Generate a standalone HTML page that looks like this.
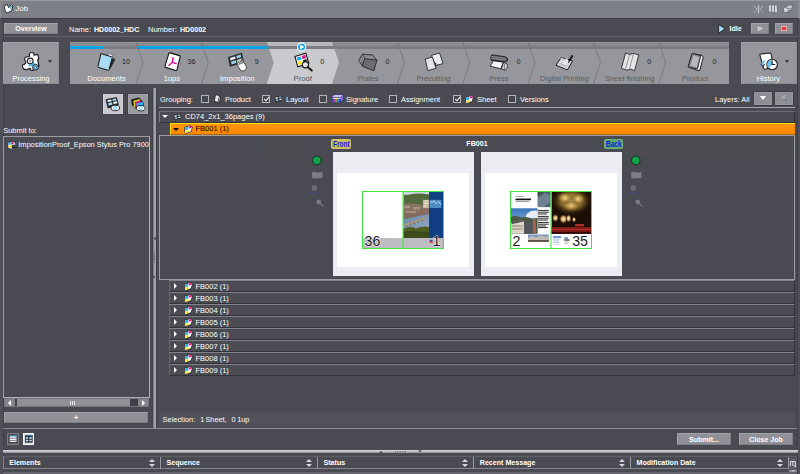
<!DOCTYPE html>
<html>
<head>
<meta charset="utf-8">
<title>Job</title>
<style>
*{box-sizing:border-box;margin:0;padding:0}
html,body{width:800px;height:474px;overflow:hidden}
body{background:#4f5058;font-family:"Liberation Sans",sans-serif;font-size:7.5px;color:#fff;position:relative;line-height:1}
.abs{position:absolute}
svg{position:absolute;overflow:visible}
svg text{font-family:"Liberation Sans",sans-serif}
#win{position:absolute;left:2.8px;top:0;width:794.8px;height:474px;background:#494a52;border-left:1px solid #3f4047;border-right:1px solid #3f4047}
#titlebar{position:absolute;left:0;top:0;width:800px;height:19.4px;background:#7e8088;border-top:1px solid #98999e;border-left:1px solid #8c8d93;border-right:2.5px solid #8e8f94;border-bottom:1px solid #3c3d44}
.t{position:absolute;white-space:nowrap;line-height:10px;height:10px}
.b{font-weight:bold;font-size:7.1px}
.btn{position:absolute;background:#909196;border:1px solid #a3a4a9;border-right-color:#7d7e84;border-bottom-color:#7d7e84;text-align:center;color:#fff}
.hl{position:absolute;height:1px;background:#8a8b91}
.vl{position:absolute;width:1px;background:#8a8b91}
.cb{position:absolute;top:95px;width:8px;height:8px;border:1px solid #b4b5b9;background:#45464d}
.cb.on:after{content:"";position:absolute;left:1.5px;top:-0.5px;width:2.2px;height:4.2px;border:solid #fff;border-width:0 1px 1px 0;transform:rotate(40deg)}
.row{position:absolute;left:169px;width:625.6px;height:12px;background:#4a4b53;border-top:1px solid #83848a;border-left:1px solid #6c6d74;border-bottom:1px solid #33343a;border-right:1px solid #2e2f36}
.row .t{top:0.5px}
.tri-r{position:absolute;width:0;height:0;border-left:3.7px solid #fff;border-top:3.3px solid transparent;border-bottom:3.3px solid transparent}
.tri-d{position:absolute;width:0;height:0;border-top:3.8px solid #fff;border-left:3.2px solid transparent;border-right:3.2px solid transparent}
.shicon{position:absolute;width:9px;height:9px}
</style>
</head>
<body>
<div id="win"></div>
<div id="titlebar"></div>
<div class="t" style="left:15.3px;top:4.2px;font-size:7.9px">Job</div>
<svg style="left:3px;top:3.4px" width="11" height="11" viewBox="0 0 11 11">
<path d="M1.2 3.2 L4.2 1.4 L5.6 4.6 L8.4 1.6 L9.8 2.6 L8.6 8 L4.2 9.8 L2.4 8.8 Z" fill="#fff" stroke="#1c1c20" stroke-width="0.9"/>
<path d="M6.4 4.6 L8.6 2.2 L9.2 2.8 L8 6.6 Z" fill="#38b8f0"/>
</svg>
<svg style="left:753px;top:4px" width="40" height="10" viewBox="753 4 40 10">
<path d="M754 6 L757 9.3 L754 12.6 M763 6 L760 9.3 L763 12.6" stroke="#b6b7bb" stroke-width="1" fill="none"/>
<path d="M758.5 5 V13.4" stroke="#c6c7cb" stroke-width="1.2"/>
<path d="M768.4 4.8 H777.2 L777.6 13 L768.4 12 Z" fill="#d6d7da" stroke="#5c5d64" stroke-width="0.7"/>
<path d="M771.4 5 V12.4 M774.4 5 V12.7" stroke="#5c5d64" stroke-width="0.8"/>
<path d="M783.4 8 L787 6.4 L787 5.2 L792.2 4.9 L792.2 9.8 L788.4 10.4 L788.4 12 L783.4 12.4 Z" fill="#d0d1d4" stroke="#5c5d64" stroke-width="0.7"/>
<path d="M787 6.4 V8.6 H792" stroke="#5c5d64" stroke-width="0.6" fill="none"/>
</svg>


<div class="btn" style="left:4px;top:23px;width:54px;height:11px"><span class="t b" style="left:0;top:0;width:52px">Overview</span></div>
<div class="t" style="left:69px;top:24.5px">Name:</div>
<div class="t b" style="left:94px;top:24.5px">HD0002_HDC</div>
<div class="t" style="left:148px;top:24.5px">Number:</div>
<div class="t b" style="left:180px;top:24.5px">HD0002</div>
<div class="t b" style="left:729.5px;top:24px">Idle</div>
<svg style="left:717px;top:23px" width="10" height="12" viewBox="717 23 10 12"><path d="M718.6 24.4 L725.2 28.8 L718.6 33.2 Z" fill="#a4dcf8" stroke="#1c1c20" stroke-width="0.9" stroke-linejoin="round"/></svg>
<div class="btn" style="left:751px;top:23px;width:18px;height:11px"><svg style="left:0;top:0" width="16" height="9" viewBox="752 24 16 9"><path d="M758 26.4 L762.8 28.6 L758 30.8 Z" fill="#c4c5c9" stroke="#dcdcdf" stroke-width="0.5"/></svg></div>
<div class="btn" style="left:775px;top:23px;width:18px;height:11px"><div class="abs" style="left:5.3px;top:2px;width:5.6px;height:5px;background:#e63c48;border:0.6px solid #e8a8ae"></div></div>
<div class="abs" style="left:3px;top:36px;width:794.5px;height:1.3px;background:#62636a"></div>


<div class="btn" style="left:3px;top:42.4px;width:56.3px;height:42px;background:#96979c;border-color:#a0a1a6 #8c8d92 #8c8d92 #a0a1a6"><span class="t" style="left:0;top:30.6px;width:54px">Processing</span><div class="tri-d" style="left:44.2px;top:16.6px;border-top:3px solid #34353c;border-left-width:2px;border-right-width:2px"></div>
<svg style="left:0;top:0" width="54" height="40" viewBox="4 43.4 54 40">
<path d="M25 60.6 Q23.6 58.4 25.8 57.6 L29.6 56.6 Q28.6 53.4 31.4 52.9 Q34.4 52.8 33.9 55.6 L37.8 54.8 L38.8 59.2 Q37 60.4 38.2 62.6 L39 66.8 L34.8 68 Q34.8 70.8 32.2 70.8 Q29.8 70.6 30.4 68.8 L26.4 70 Q23.4 70.4 22.6 67.6 Q21.8 65.2 24.2 64.8 Q26.8 63.4 25 60.6 Z" fill="#fff" stroke="#1c1c20" stroke-width="1.15" stroke-linejoin="round"/>
<circle cx="30.2" cy="61.4" r="2.9" fill="#fff" stroke="#1c1c20" stroke-width="1.1"/>
<circle cx="30.2" cy="61.4" r="0.9" fill="#dfe6ea" stroke="#1c1c20" stroke-width="0.4"/>
<path d="M28.6 65.9 Q32.6 66.6 34.4 62.6" stroke="#3cb0ec" stroke-width="1.5" fill="none"/>
<circle cx="35.5" cy="67.7" r="2.9" fill="#6cc0ec" stroke="#1c1c20" stroke-width="1"/>
<circle cx="35.5" cy="67.7" r="1" fill="#e8f4fa" stroke="#1c1c20" stroke-width="0.5"/>
</svg></div>
<div class="btn" style="left:740.5px;top:42.4px;width:56px;height:42px;background:#96979c;border-color:#a0a1a6 #8c8d92 #8c8d92 #a0a1a6"><span class="t" style="left:-0.2px;top:30.6px;width:54px">History</span><div class="tri-d" style="left:43.7px;top:16.6px;border-top:3px solid #34353c;border-left-width:2px;border-right-width:2px"></div>
<svg style="left:0;top:0" width="54" height="40" viewBox="741.5 43.4 54 40">
<path d="M759.4 55.6 Q759 54.6 760.2 54.4 L769.4 53.4 Q770.4 53.4 770.6 54.4 L772.6 66 Q772.8 67.2 771.6 67.4 L764.6 69.6 Q763.6 69.8 763.2 68.8 Z" fill="#fff" stroke="#1c1c20" stroke-width="1.1"/>
<path d="M762.4 66 Q761.4 62.4 764.6 61.2" stroke="#6cc4f0" stroke-width="1.6" fill="none"/>
<path d="M760.4 64.6 L762.4 67 L764.2 64.4" stroke="#1c1c20" stroke-width="0.9" fill="none"/>
<circle cx="771.6" cy="64.9" r="5.3" fill="#fff" stroke="#1c1c20" stroke-width="1.1"/>
<path d="M771.6 64.9 L771.6 60.2 A4.7 4.7 0 0 0 768.6 68.6 Z" fill="#6cc4f0"/>
<path d="M771.6 61 V64.9 H774.8" stroke="#1c1c20" stroke-width="1.1" fill="none"/>
</svg></div>

<svg style="left:0;top:42px" width="800" height="42" viewBox="0 42 800 42">
<rect x="70" y="42" width="659" height="42" fill="#96979c"/>
<polygon points="266.7,42 332.0,42 339.0,62.5 332.0,84 266.7,84 273.7,62.5" fill="#c9cace"/>
<rect x="70" y="42" width="659" height="4" fill="#3a3b46" fill-opacity="0.13"/>
<rect x="70" y="42" width="659" height="0.8" fill="#fff" fill-opacity="0.12"/>
<rect x="70" y="46" width="659" height="3" fill="#7c7d83"/>
<rect x="70" y="46" width="33" height="3" fill="#0aa4e4"/>
<rect x="137" y="46" width="131.2" height="3" fill="#0aa4e4"/>
<polyline points="136.0,42 143.0,62.5 136.0,84" fill="none" stroke="#6f7077" stroke-width="0.7"/>
<polyline points="201.3,42 208.3,62.5 201.3,84" fill="none" stroke="#6f7077" stroke-width="0.7"/>
<polyline points="397.4,42 404.4,62.5 397.4,84" fill="none" stroke="#6f7077" stroke-width="0.7"/>
<polyline points="462.7,42 469.7,62.5 462.7,84" fill="none" stroke="#6f7077" stroke-width="0.7"/>
<polyline points="528.0,42 535.0,62.5 528.0,84" fill="none" stroke="#6f7077" stroke-width="0.7"/>
<polyline points="593.4,42 600.4,62.5 593.4,84" fill="none" stroke="#6f7077" stroke-width="0.7"/>
<polyline points="658.7,42 665.7,62.5 658.7,84" fill="none" stroke="#6f7077" stroke-width="0.7"/>
<g transform="translate(107.0,62)"><path d="M0.5 -8.2 L5 -7.6 L6.2 -3.8 L8.4 -2.6 L3.6 6.4 L-1 5 Z" fill="#2a2a2e"/>
<path d="M0.8 -7.9 L4.8 -7.2 L5.8 -3.6 L3 -2 Z" fill="#fff"/>
<path d="M-6.2 -7.8 Q-6.6 -8.6 -5.6 -8.3 L4.6 -5.2 Q5.4 -4.9 5.2 -4.1 L2 7.8 Q1.8 8.6 1 8.3 L-8.6 5.4 Q-9.3 5.1 -9.1 4.4 Z" fill="#a8daf4" stroke="#111" stroke-width="1"/></g>
<text x="106.5" y="81.1" text-anchor="middle" font-size="7.6" fill="#fff">Documents</text>
<text x="126.0" y="63.5" text-anchor="middle" font-size="7.2" fill="#1c1c20">10</text>
<g transform="translate(172.4,62)"><path d="M-3.6 -8.6 Q-3.2 -9.4 -2.2 -9.1 L7 -6.4 Q7.9 -6.1 7.7 -5.2 L4.6 7.8 Q4.3 8.8 3.4 8.5 L-6.8 5.4 Q-7.6 5.1 -7.4 4.2 Z" fill="#fff" stroke="#111" stroke-width="1.1"/>
<path d="M0 0.3 L0.6 -4.2 M0 0.3 L3.8 1.6 M0 0.3 L-3.4 3.2" stroke="#d4148c" stroke-width="1.5" stroke-linecap="round" fill="none"/></g>
<text x="171.9" y="81.1" text-anchor="middle" font-size="7.6" fill="#fff">1ups</text>
<text x="191.4" y="63.5" text-anchor="middle" font-size="7.2" fill="#1c1c20">36</text>
<g transform="translate(237.8,62)"><path d="M-9.4 -4.6 L3.8 -8.8 L5.6 0.2 L-7.6 4.2 Z" fill="#2e3238" stroke="#1c1c20" stroke-width="0.8" stroke-linejoin="round"/>
<path d="M-7.8 -4 L-2.8 -5.6 L-2.2 -3.2 L-7.2 -1.6 Z" fill="#f0f6fa"/>
<path d="M-1.4 -6 L2.8 -7.4 L3.4 -5 L-0.8 -3.6 Z" fill="#9cd8f4"/>
<path d="M-6.8 -0.2 L-1.8 -1.8 L-1.2 0.8 L-6.2 2.4 Z" fill="#9cd8f4"/>
<path d="M-0.4 -2.4 L3.8 -3.8 L4.4 -1.2 L0.2 0.2 Z" fill="#dfeef6"/>
<path d="M-1 -1.6 L0.6 -2.8 L2.6 -3.2 L4.4 -2.4 L5.6 -0.6 L8.4 4 Q9.2 7.2 7 8.6 Q4.4 9.8 2.4 7.8 Q0.8 5.6 -0.6 2.2 Z" fill="#fff" stroke="#26262a" stroke-width="0.8" stroke-linejoin="round"/>
<path d="M0.2 -1.2 L2.2 2.6 M1.8 -2.2 L3.8 1.8 M3.4 -2.2 L5.2 1.4 M-0.6 1 L4.6 -1.2 M0.4 2.6 L5.4 0.4" stroke="#26262a" stroke-width="0.55"/></g>
<text x="237.3" y="81.1" text-anchor="middle" font-size="7.6" fill="#fff">Imposition</text>
<text x="256.8" y="63.5" text-anchor="middle" font-size="7.2" fill="#1c1c20">9</text>
<g transform="translate(303.2,62)"><path d="M-8.2 -5.4 L2.6 -8.8 L5.6 1.4 L-5.4 4.8 Z" fill="#fff" stroke="#111" stroke-width="1.1"/>
<path d="M-6.6 -4.4 L-2.6 -5.6 L-1.6 -2.4 L-5.6 -1.2 Z" fill="#18a8ec"/>
<path d="M-1.6 -6 L2 -7.2 L3 -4 L-0.6 -2.8 Z" fill="#e0148c"/>
<path d="M-5.4 -0.2 L-1.4 -1.4 L-0.4 1.8 L-4.4 3 Z" fill="#ffe414"/>
<path d="M-0.4 -1.8 L3.2 -3 L4.2 0.2 L0.6 1.4 Z" fill="#222"/>
<circle cx="2.2" cy="2.8" r="3.1" fill="#e6e6e8" stroke="#111" stroke-width="1.1"/>
<path d="M4.4 5 L8.6 8.6" stroke="#111" stroke-width="2" stroke-linecap="round"/></g>
<text x="302.7" y="81.1" text-anchor="middle" font-size="7.6" fill="#52535a">Proof</text>
<text x="322.2" y="63.5" text-anchor="middle" font-size="7.2" fill="#1c1c20">0</text>
<g transform="translate(368.6,62)"><path d="M-6 -7.8 L3.7 -7 L8.2 -1.8 L5.2 8.7 L-6 4.2 L-9.8 -1.8 Z" fill="#6a6b70" stroke="#2e2e32" stroke-width="1" stroke-linejoin="round"/>
<path d="M-6 -7.8 L3.7 -7 L8.2 -1.8 L-3.8 -3.3 Z" fill="#8e8f94" stroke="#2e2e32" stroke-width="0.7"/>
<path d="M-6 -7.8 L-3.8 -3.3 L-6 4.2 L-9.8 -1.8 Z" fill="#a0a1a5" stroke="#2e2e32" stroke-width="0.7"/>
<path d="M-7.2 -5.8 L-5 -1.6 L-7 3 M-8.4 -3.8 L-6.4 0 L-7.8 1.6" stroke="#2e2e32" stroke-width="0.5" fill="none"/>
<path d="M-3.8 -3.3 L8.2 -1.8 L5.2 8.7 L-6 4.2 Z" fill="#6c6d72" stroke="#2e2e32" stroke-width="0.8"/></g>
<text x="368.1" y="81.1" text-anchor="middle" font-size="7.6" fill="#5a5b62">Plates</text>
<text x="387.6" y="63.5" text-anchor="middle" font-size="7.2" fill="#1c1c20">0</text>
<g transform="translate(434.0,62)"><path d="M-2.6 -6.6 L5.6 -9 L9 1.6 L1.6 3.6 Z" fill="#ececee" stroke="#2a2a2e" stroke-width="0.9"/>
<path d="M-8.8 -3 L-1.6 -5 L2 6.4 L-6.2 8.6 Z" fill="#e4e4e6" stroke="#2a2a2e" stroke-width="0.9"/>
<path d="M0.6 0.6 L4 2.6 L2.2 2.2 L1.6 4 Z" fill="#2a2a2e"/></g>
<text x="433.5" y="81.1" text-anchor="middle" font-size="7.6" fill="#5a5b62">Precutting</text>
<g transform="translate(499.4,62)"><path d="M-7.6 -7.2 L6 -5.2 Q8.6 -4.2 8.2 -2 Q7.6 0 5.6 -0.2 L-8.4 -1.8 Q-9.4 -4.6 -7.6 -7.2 Z" fill="#4a4b50" stroke="#1e1e22" stroke-width="0.9"/>
<path d="M-8 -5.6 L6.6 -3.6 M-8.4 -3.8 L6.8 -1.8" stroke="#b8b9bd" stroke-width="0.7"/>
<path d="M-6 -1.2 L4 0.2 L1.4 6.8 L-9.2 4.2 Z" fill="#f4f4f6" stroke="#1e1e22" stroke-width="0.9"/>
<path d="M3.8 1 Q7.4 0 8 3.4 Q8.4 7 5.8 8.2 L2 7 Z" fill="#dcdcdf" stroke="#1e1e22" stroke-width="0.9"/>
<path d="M5.6 1.4 Q3.8 4.6 5.6 7.8" stroke="#1e1e22" stroke-width="0.6" fill="none"/></g>
<text x="498.9" y="81.1" text-anchor="middle" font-size="7.6" fill="#5a5b62">Press</text>
<text x="518.4" y="63.5" text-anchor="middle" font-size="7.2" fill="#1c1c20">0</text>
<g transform="translate(564.8,62)"><path d="M-3.6 -4.6 L7.8 -1.2 L2.6 8 L-8.8 3.2 Z" fill="#d4d5d8" stroke="#222" stroke-width="1"/>
<path d="M-4.4 1.8 L1.8 4.6" stroke="#8a8b90" stroke-width="0.7"/>
<path d="M-2.4 -1.4 L0.6 2.4 L2 -3.6 L3.6 1" stroke="#fff" stroke-width="0.8" fill="none"/>
<path d="M-6.4 -6.2 L-3 -1.6 M-0.2 -8.6 L0.8 -2.4 M-3.6 -7.4 L-1.2 -2.4" stroke="#b4b5ba" stroke-width="0.6"/>
<path d="M7.4 -6 L4.6 -1.4" stroke="#111" stroke-width="1.9" stroke-linecap="round"/>
<path d="M4.6 -1.4 L3.4 1" stroke="#111" stroke-width="0.8"/></g>
<text x="564.3" y="81.1" text-anchor="middle" font-size="7.6" fill="#5a5b62">Digital Printing</text>
<g transform="translate(630.2,62)"><path d="M-4.6 -9 L-0.6 -7.6 L3.4 -8.6 L8.6 -7 L4.4 8.6 L0.4 7.2 L-3.6 8.2 L-8.8 6.4 Z" fill="#e6e6e8" stroke="#2a2a2e" stroke-width="0.9"/>
<path d="M-0.6 -7.6 L-4.6 6.6 L-3.6 8.2 M3.4 -8.6 L-0.4 5.6 L0.4 7.2" stroke="#6c6d72" stroke-width="0.7" fill="none"/></g>
<text x="629.7" y="81.1" text-anchor="middle" font-size="7.6" fill="#5a5b62">Sheet finishing</text>
<text x="649.2" y="63.5" text-anchor="middle" font-size="7.2" fill="#1c1c20">0</text>
<g transform="translate(695.6,62)"><path d="M-3.4 -8.6 L6.4 -6.6 L7.6 -4.8 L4.4 8 L2.4 8.6 L-7.4 4.8 Z" fill="#f4f4f6" stroke="#222" stroke-width="1"/>
<path d="M-3.4 -8.6 L5.2 -6.4 L1.8 7.2 L-7.4 4.8 Z" fill="#8e8f94" stroke="#222" stroke-width="0.9"/>
<path d="M-2.2 -6.2 L3.6 -4.8 L1 5.2 L-5 3.6 Z" fill="#b8b9bd"/></g>
<text x="695.1" y="81.1" text-anchor="middle" font-size="7.6" fill="#5a5b62">Product</text>
<text x="714.6" y="63.5" text-anchor="middle" font-size="7.2" fill="#1c1c20">0</text>
<circle cx="301.6" cy="47" r="4.1" fill="#1ca6e8" stroke="#fff" stroke-width="1.1"/><path d="M300.2 44.6 L304.3 47 L300.2 49.4 Z" fill="#fff"/>
</svg>

<div class="btn" style="left:103px;top:94px;width:20px;height:20px;background:#c8c9cd;border-color:#d4d5d8;box-shadow:0 0 0 1px #3e3f46"><svg style="left:0;top:0" width="18" height="18" viewBox="104 95 18 18">
<path d="M106 99.6 L116.6 97.6 L118.4 105 L108 108 Z" fill="#2c3036" stroke="#1c1c20" stroke-width="0.8"/>
<path d="M107.4 100.2 L111.2 99.5 L111.6 101.2 L107.8 102 Z" fill="#eef6fa"/>
<path d="M112.4 99.2 L116 98.5 L116.5 100.3 L112.8 101 Z" fill="#a6dcf4"/>
<path d="M108.2 103.2 L112 102.3 L112.5 104.4 L108.7 105.4 Z" fill="#a6dcf4"/>
<path d="M113.2 102 L116.8 101.2 L117.3 103.2 L113.7 104 Z" fill="#eef6fa"/>
<ellipse cx="115.3" cy="108" rx="4.3" ry="2.7" fill="#fff" stroke="#1c1c20" stroke-width="0.9"/>
<circle cx="115.1" cy="107.9" r="2.1" fill="#7fd0f6"/><circle cx="115.1" cy="107.7" r="1" fill="#e8f8ff"/>
</svg></div>
<div class="btn" style="left:128px;top:94px;width:20px;height:20px;background:#9a9b9f;border-color:#a4a5a9;box-shadow:0 0 0 1px #3e3f46"><svg style="left:0;top:0" width="18" height="18" viewBox="129 95 18 18">
<path d="M131.2 99.6 L139 97.4 L143.8 103 L143.6 108 L137 109.6 L131.8 105 Z" fill="#141418"/>
<path d="M133.2 100.8 L139.6 99 L140.4 105.4 L134 107.2 Z" fill="#e6d018"/>
<path d="M134.8 102 L141 100.4 L141.8 106.4 L135.6 108 Z" fill="#c8147c"/>
<path d="M136.4 103.4 L143 101.8 L143.4 107.6 L137.2 109 Z" fill="#20b4f4"/>
<ellipse cx="140.8" cy="108.2" rx="4.3" ry="2.7" fill="#fff" stroke="#1c1c20" stroke-width="0.9"/>
<circle cx="140.6" cy="108.1" r="2.1" fill="#7fd0f6"/><circle cx="140.6" cy="107.9" r="1" fill="#e8f8ff"/>
</svg></div>
<div class="t" style="left:3.2px;top:125.6px">Submit to:</div>
<div class="abs" style="left:3px;top:136px;width:147.3px;height:261.6px;border:1px solid #9c9da2;border-right:1.3px solid #b0b1b5;border-bottom-color:#b0b1b5"></div>
<div class="t" style="left:18.3px;top:140px;width:131px;overflow:hidden;font-size:7.4px">ImpositionProof_Epson Stylus Pro 7900</div>
<svg style="left:7px;top:140.5px" width="10" height="9" viewBox="0 0 10 9">
<path d="M0.5 1.6 L6 0.5 L8.6 2.4 L9.2 7.4 L7 8.4 L1.2 7.4 Z" fill="#fff" stroke="#26262a" stroke-width="0.7"/>
<path d="M1.2 2 L3.6 1.5 L3.8 3.6 L1.4 4 Z" fill="#18b0f0"/>
<path d="M4 1.4 L6.2 1 L6.6 3 L4.2 3.5 Z" fill="#e0148c"/>
<path d="M1.5 4.4 L3.9 4 L4.1 6.4 L1.8 6.8 Z" fill="#ffe414"/>
<path d="M4.6 4 L8.4 3.4 L8.8 7.2 L7 8 L4.8 7.2 Z" fill="#1c1c20"/>
<path d="M5.4 5.2 L7.6 4.8" stroke="#d8d8dc" stroke-width="0.6"/>
</svg>
<!-- scrollbar -->
<div class="abs" style="left:4px;top:398px;width:145px;height:9px;background:#3f4047;border:1px solid #74757b"></div>
<div class="abs" style="left:5px;top:399px;width:10px;height:7px;background:#85868c"><div class="tri-r" style="left:2.5px;top:0.5px;transform:scaleX(-1);border-top-width:3px;border-bottom-width:3px"></div></div>
<div class="abs" style="left:17px;top:399px;width:113px;height:7px;background:#909196"><div class="abs" style="left:53px;top:1.5px;width:1px;height:4px;background:#e6e6e8;box-shadow:2px 0 #e6e6e8,4px 0 #e6e6e8"></div></div>
<div class="abs" style="left:138px;top:399px;width:10px;height:7px;background:#85868c"><div class="tri-r" style="left:3.5px;top:0.5px;border-top-width:3px;border-bottom-width:3px"></div></div>
<div class="btn" style="left:4px;top:412px;width:144px;height:11px"><span class="t b" style="left:0;top:0;width:142px">+</span></div>
<!-- splitter -->
<div class="abs" style="left:152.2px;top:88px;width:4.5px;height:340px;background:#404148"></div>
<div class="abs" style="left:152.7px;top:88px;width:3.5px;height:340px;background:linear-gradient(90deg,#7e7f85,#8c8d92 35%,#a6a7ab 60%,#a0a1a6)"></div>
<svg style="left:152px;top:234px" width="5" height="48" viewBox="152 234 5 48">
<path d="M155.6 236.6 L153.4 238.4 L155.6 240.2 Z" fill="#44454c"/>
<path d="M153.4 275.2 L155.6 277 L153.4 278.8 Z" fill="#44454c"/>
<path d="M154.4 252 V263.4" stroke="#44454c" stroke-width="1.2" stroke-dasharray="1 1.3"/>
</svg>

<div class="t" style="left:160px;top:94.6px">Grouping:</div>
<div class="cb" style="left:201px"></div>
<svg style="left:213px;top:93.5px" width="9" height="10" viewBox="0 0 9 10"><path d="M2.6 0.6 L6.4 1.4 L8 3 L6.6 9 L5 9.4 L0.8 7.4 Z" fill="#2a2a2e"/><path d="M3 1.2 L6 1.9 L4.6 8 L1.6 6.8 Z" fill="#e8e8ea"/><path d="M6.4 2.4 L7.2 3.2 L5.9 8.4 L5.2 8.4 Z" fill="#b8b9bd"/></svg>
<div class="t" style="left:225px;top:94.6px">Product</div>
<div class="cb on" style="left:262px"></div>
<svg style="left:274px;top:95px" width="9" height="8" viewBox="0 0 9 8"><path d="M0.4 2.2 L7.4 0.6 L8.6 5.4 L1.6 7.4 Z" fill="#2c3036"/><path d="M1.3 2.7 L3.7 2.1 L4 3.3 L1.6 3.9 Z" fill="#f2f8fc"/><path d="M4.8 1.9 L7 1.4 L7.3 2.5 L5.1 3.1 Z" fill="#a6dcf4"/><path d="M1.9 4.8 L4.2 4.2 L4.5 5.5 L2.2 6.1 Z" fill="#a6dcf4"/><path d="M5.3 3.9 L7.5 3.4 L7.8 4.6 L5.6 5.2 Z" fill="#f2f8fc"/></svg>
<div class="t" style="left:286px;top:94.6px">Layout</div>
<div class="cb" style="left:319px"></div>
<svg style="left:331px;top:94.3px" width="13" height="9" viewBox="0 0 13 9"><path d="M0.4 3 L3 0.6 L12.4 0.6 L12.4 5.6 L9.8 8.4 L1.6 8.4 L0.4 6 Z" fill="#4838a8"/><path d="M1.2 2.8 L3.2 1.2 L11.6 1.2 L9.8 2.8 Z" fill="#f0f0f8"/><path d="M1.6 3.8 H9.6 V5 H1.6 Z" fill="#dcdcf4"/><path d="M10 3.2 L12 1.4 V5.2 L10 7.4 Z" fill="#8474d8"/><rect x="2.4" y="5.6" width="1.4" height="2.2" fill="#f03c9c"/><rect x="4.6" y="3.6" width="1.2" height="4.2" fill="#ffe414"/><rect x="6.6" y="5.6" width="1.4" height="2.2" fill="#28b8f4"/><rect x="4.6" y="5.6" width="1.2" height="1" fill="#1c8c3c"/></svg>
<div class="t" style="left:346px;top:94.6px">Signature</div>
<div class="cb" style="left:389px"></div>
<div class="t" style="left:401px;top:94.6px">Assignment</div>
<div class="cb on" style="left:453px"></div>
<svg style="left:465px;top:94.5px" width="9" height="9" viewBox="0 0 9 9"><path d="M0.6 2.2 L6.4 0.6 L8.4 2 L7.2 6.6 L1.8 8.4 L0.6 7.4 Z" fill="#fff" stroke="#26262a" stroke-width="0.8"/><path d="M1.2 2.6 L4 1.9 L4.3 4.4 L1.4 5.2 Z" fill="#18b0f0"/><path d="M4.6 1.7 L7.2 1.1 L7.8 2.6 L5 3.8 Z" fill="#e0148c"/><path d="M1.5 5.5 L4.3 4.8 L4.5 7 L1.9 7.8 Z" fill="#ffe414"/></svg>
<div class="t" style="left:477px;top:94.6px">Sheet</div>
<div class="cb" style="left:508px"></div>
<div class="t" style="left:520px;top:94.6px">Versions</div>
<div class="t" style="left:715px;top:94.6px">Layers: All</div>
<div class="btn" style="left:754.3px;top:92px;width:17.8px;height:12.8px;background:#8e8f94;border-color:#96979c;box-shadow:0 0 0 0.8px #3a3b42"><div class="tri-d" style="left:4.6px;top:3.2px;border-top-width:4px;border-left-width:3.7px;border-right-width:3.7px"></div></div>
<div class="btn" style="left:775.3px;top:92px;width:17.8px;height:12.8px;background:#8e8f94;border-color:#96979c;box-shadow:0 0 0 0.8px #3a3b42"><svg style="left:0;top:0" width="16" height="11" viewBox="776.3 93 16 11"><ellipse cx="783.6" cy="96.8" rx="4.4" ry="1.7" transform="rotate(-32 783.6 96.8)" fill="#a6a7ab" stroke="#74757b" stroke-width="0.6"/><path d="M785 98.4 L787.4 101.6" stroke="#74757b" stroke-width="1.1"/><path d="M784 98 L785.6 97.2 L785.8 99 Z" fill="#9ccbe6"/></svg></div>
<div class="abs" style="left:159px;top:107.1px;width:636px;height:1.3px;background:#a4a5aa"></div>
<div class="abs" style="left:159px;top:111px;width:635.6px;height:12px;border-right:1px solid #2e2f36;border-bottom:1px solid #34353b;border-top:1px solid #6c6d74;border-left:1px solid #7b7c83"></div>
<div class="tri-d" style="left:162.4px;top:115.4px"></div>
<svg style="left:173px;top:113px" width="9" height="8" viewBox="0 0 9 8"><path d="M0.4 2.2 L7.4 0.6 L8.6 5.4 L1.6 7.4 Z" fill="#2c3036"/><path d="M1.3 2.7 L3.7 2.1 L4 3.3 L1.6 3.9 Z" fill="#f2f8fc"/><path d="M4.8 1.9 L7 1.4 L7.3 2.5 L5.1 3.1 Z" fill="#a6dcf4"/><path d="M1.9 4.8 L4.2 4.2 L4.5 5.5 L2.2 6.1 Z" fill="#a6dcf4"/><path d="M5.3 3.9 L7.5 3.4 L7.8 4.6 L5.6 5.2 Z" fill="#f2f8fc"/></svg>
<div class="t" style="left:185px;top:112px">CD74_2x1_36pages (9)</div>
<div class="abs" style="left:170px;top:123px;width:625px;height:12px;background:linear-gradient(#ff9410,#ff8c00 70%,#fa8800);border-bottom:1px solid #a86a14;border-top:1px solid #f2dc14;border-left:1px solid #f2dc14"></div>
<div class="tri-d" style="left:172.7px;top:127.6px;border-top-color:#000;border-top-width:3.3px;border-left-width:3px;border-right-width:3px"></div>
<svg style="left:183.5px;top:124.5px" width="9" height="9" viewBox="0 0 9 9"><path d="M0.6 2.2 L6.4 0.6 L8.4 2 L7.2 6.6 L1.8 8.4 L0.6 7.4 Z" fill="#fff" stroke="#26262a" stroke-width="0.8"/><path d="M1.2 2.6 L4 1.9 L4.3 4.4 L1.4 5.2 Z" fill="#18b0f0"/><path d="M4.6 1.7 L7.2 1.1 L7.8 2.6 L5 3.8 Z" fill="#e0148c"/><path d="M1.5 5.5 L4.3 4.8 L4.5 7 L1.9 7.8 Z" fill="#ffe414"/></svg>
<div class="t" style="left:195.5px;top:124px;color:#000">FB001 (1)</div>
<div class="abs" style="left:159px;top:135px;width:636.2px;height:145px;border:1px solid #9d9ea3;background:#494a52"></div>
<div class="abs" style="left:264.6px;top:136.2px;width:38.2px;height:20.2px;background:#4c4c50"></div>
<div class="abs" style="left:622px;top:137px;width:172px;height:19.4px;background:#4c4c50"></div>
<div class="abs" style="left:330.5px;top:138.6px;width:20.5px;height:10.2px;background:#cbbd5a;border:1px solid #d2c666;border-radius:1.5px"><span class="t b" style="left:1.2px;top:0.3px;color:#1414ee;font-size:8.2px;transform:scaleX(0.8);transform-origin:0 0">Front</span></div>
<div class="abs" style="left:603.5px;top:138.6px;width:19.5px;height:10.2px;background:#5aaa62;border:1px solid #6cb674;border-radius:1.5px"><span class="t b" style="left:1.2px;top:0.3px;color:#1414ee;font-size:8.2px;transform:scaleX(0.8);transform-origin:0 0">Back</span></div>
<div class="t b" style="left:427px;top:139px;width:100px;text-align:center">FB001</div>
<div class="abs" style="left:332.5px;top:151.5px;width:141px;height:124.5px;background:#ebedf3"></div>
<div class="abs" style="left:337.0px;top:173px;width:131.5px;height:94px;background:#fff"></div>
<div class="abs" style="left:480.5px;top:151.5px;width:141px;height:124.5px;background:#ebedf3"></div>
<div class="abs" style="left:485.0px;top:173px;width:131.5px;height:94px;background:#fff"></div>

<svg style="left:362px;top:191px" width="82" height="58" viewBox="362 191 82 58">
<defs>
<linearGradient id="gHill" x1="0" y1="0" x2="0" y2="1"><stop offset="0" stop-color="#4e6a3a"/><stop offset="1" stop-color="#5f6e4c"/></linearGradient>
<linearGradient id="gTown" x1="0" y1="0" x2="0" y2="1"><stop offset="0" stop-color="#8a7664"/><stop offset="1" stop-color="#80685c"/></linearGradient>
<linearGradient id="gRiver" x1="0" y1="0" x2="1" y2="1"><stop offset="0" stop-color="#6c86a6"/><stop offset="1" stop-color="#90a8c4"/></linearGradient>
<radialGradient id="gFw1" cx="0.5" cy="0.5" r="0.5"><stop offset="0" stop-color="#f0d890"/><stop offset="0.45" stop-color="#b08c3c"/><stop offset="1" stop-color="#3a280c" stop-opacity="0"/></radialGradient>
<radialGradient id="gFw2" cx="0.5" cy="0.5" r="0.5"><stop offset="0" stop-color="#fff4d0"/><stop offset="0.5" stop-color="#c8a060"/><stop offset="1" stop-color="#402008" stop-opacity="0"/></radialGradient>
<linearGradient id="gSky" x1="0" y1="0" x2="0" y2="1"><stop offset="0" stop-color="#3c74bc"/><stop offset="1" stop-color="#a4c4e4"/></linearGradient>
</defs>
<rect x="362" y="191" width="82" height="58" fill="#fff"/>
<rect x="362.5" y="238" width="81" height="10.5" fill="#bdbdc1"/>
<rect x="403.5" y="191.5" width="25.5" height="46.5" fill="url(#gHill)"/>
<path d="M403.5 191.5 H429 V194.5 Q418 192.4 410 194.6 Q406 195.4 403.5 194.6 Z" fill="#ccd6de"/>
<path d="M403.5 204.5 Q412 202.5 421 205 L429 203.5 V218 H403.5 Z" fill="url(#gTown)"/>
<path d="M403.5 206 H410 V208 H403.5 Z M413 207 H420 V209.4 H413 Z M406 211 H416 V213 H406 Z" fill="#b4a090" fill-opacity="0.7"/>
<path d="M403.5 219 L429 214 V228 L403.5 230 Z" fill="url(#gRiver)"/>
<path d="M404 224.4 L425 217.4 L425.6 219 L404.6 226.2 Z" fill="#b49a74"/>
<path d="M406 225 L406.6 227 M410 223.6 L410.6 225.6 M414 222.2 L414.6 224.2 M418 220.8 L418.6 222.8 M422 219.4 L422.6 221.4" stroke="#6c5c44" stroke-width="0.8"/>
<path d="M403.5 229 Q410 225.4 416 228.4 Q422 225.8 429 227 V238 H403.5 Z" fill="#515c22"/>
<path d="M403.5 232 Q412 229.4 420 232 Q425 231 429 232 V238 H403.5 Z" fill="#3c4a1c"/>
<rect x="429" y="191.5" width="14.5" height="46.5" fill="#0f3f80"/>
<rect x="429.6" y="199.8" width="11.8" height="8.2" fill="#4e8cc4"/>
<path d="M430 201 L432 203 L434 200.6 L436 204 L438.4 201.4 L441 205" stroke="#a8d0ec" stroke-width="1" fill="none"/>
<rect x="423" y="199.8" width="6" height="8.2" fill="#c4b49c"/>
<path d="M423.6 201 H428 M424 203.4 H428.4 M423.6 206 H427" stroke="#f0ece4" stroke-width="0.9"/>
<rect x="429.6" y="239.8" width="3" height="1.6" fill="#2c4ca8"/><rect x="429.6" y="241.4" width="3" height="1.6" fill="#e03838"/>
<rect x="362.5" y="191.5" width="81" height="57" fill="none" stroke="#3fe43f" stroke-width="1"/>
<path d="M403 191 V249" stroke="#3fe43f" stroke-width="1"/>
<text x="364.6" y="246.2" font-size="14.2" fill="#18181a" stroke="#fff" stroke-width="1.2" stroke-opacity="0.8" paint-order="stroke">36</text>
<text x="432.4" y="246.2" font-size="14.2" fill="#18181a" stroke="#fff" stroke-width="1.2" stroke-opacity="0.8" paint-order="stroke">1</text>
</svg>


<svg style="left:510px;top:191px" width="82" height="58" viewBox="510 191 82 58">
<rect x="510" y="191" width="82" height="58" fill="#fff"/>
<path d="M515.5 196.4 H524" stroke="#666" stroke-width="0.6"/>
<path d="M515.5 199.4 H531" stroke="#111" stroke-width="1.7"/>
<path d="M515.5 201.6 H529" stroke="#555" stroke-width="0.6"/>
<rect x="537.7" y="191.5" width="13" height="15.6" fill="#4a6270"/>
<path d="M537.7 198 L545 193 L550.7 196 V202 L543 207 H537.7 Z" fill="#8090a0" fill-opacity="0.7"/>
<path d="M537.7 191.5 H544 L537.7 196 Z" fill="#3c5440"/>
<rect x="510.5" y="208.3" width="27" height="25.4" fill="url(#gSky)"/>
<path d="M528 213 Q532 209.6 537.5 211 V218 H526 Q525 215 528 213 Z" fill="#e4ecf4"/>
<path d="M510.5 217 Q516 214.6 521 217.6 Q527 216 532 219 L537.5 218 V233.7 H510.5 Z" fill="#4c5a44"/>
<path d="M511 222 L524 220 V233.7 H511 Z" fill="#dcd4c4"/>
<path d="M511 222 L524 220 L526 221 L512 224 Z" fill="#4a4a50"/>
<path d="M512 226 H523 M512 229 H523" stroke="#847868" stroke-width="0.9"/>
<path d="M524 221 L534 222 V233.7 H524 Z" fill="#54545c"/>
<path d="M533 219 L535.6 219 L536 233.7 H533 Z" fill="#a8644c"/>
<rect x="538" y="209.4" width="10.8" height="18.4" fill="#fff"/>
<path d="M538 210.4 H548.8 M538 212.2 H548.8 M538 214 H547 M538 216.4 H548.8 M538 218.2 H548.8 M538 220 H548 M538 222.4 H548.8 M538 224.2 H548.8 M538 226 H546 M538 227.6 H548" stroke="#2a2a2a" stroke-width="1"/>
<rect x="528" y="234.5" width="20.8" height="7.4" fill="#7c98c0"/>
<path d="M528 238 L532 236 L536 237.4 L541 235.6 L545 237 L548.8 236 V241.9 H528 Z" fill="#c4bcb0"/>
<path d="M528 240 H548.8 V241.9 H528 Z" fill="#5c5448"/>
<rect x="551.5" y="191.5" width="39.5" height="42.2" fill="#1c0e06"/>
<clipPath id="cFw"><rect x="551.5" y="191.5" width="39.5" height="42.2"/></clipPath>
<g clip-path="url(#cFw)">
<ellipse cx="571.5" cy="201" rx="20" ry="14" fill="url(#gFw1)"/>
<ellipse cx="565" cy="198" rx="9" ry="7" fill="url(#gFw1)"/>
<ellipse cx="578" cy="199" rx="8" ry="7" fill="url(#gFw1)"/>
<ellipse cx="571" cy="206" rx="10" ry="6" fill="url(#gFw1)" fill-opacity="0.7"/>
</g>
<ellipse cx="555.4" cy="218" rx="3.4" ry="4.2" fill="url(#gFw2)"/>
<ellipse cx="563.4" cy="219" rx="4.4" ry="5" fill="url(#gFw2)"/>
<ellipse cx="568.6" cy="218.4" rx="3" ry="4.4" fill="url(#gFw2)"/>
<ellipse cx="574" cy="219.6" rx="2.2" ry="3" fill="url(#gFw2)"/>
<rect x="551.5" y="227" width="39.5" height="6.7" fill="#7c1814"/>
<path d="M551.5 229.4 H591" stroke="#c83c34" stroke-width="1.3" stroke-dasharray="2 1"/>
<path d="M575 224 H584 V226.4 H575 Z" fill="#b02c28"/>
<path d="M551.5 232 H591 V233.7 H551.5 Z" fill="#2c0c08"/>
<path d="M553 237 H561" stroke="#2c6cc8" stroke-width="1.4"/>
<path d="M553 239.2 H560 M553 240.8 H559 M553 242.4 H560" stroke="#9cc0e0" stroke-width="0.8"/>
<path d="M554 244.4 H559" stroke="#bbb" stroke-width="0.6"/>
<path d="M564.3 238 H568" stroke="#2c6cc8" stroke-width="1.2"/>
<path d="M564.3 240 H569.5" stroke="#222" stroke-width="1.2"/>
<path d="M564.3 242 H569 M564.3 243.4 H568" stroke="#999" stroke-width="0.6"/>
<rect x="510.5" y="191.5" width="81" height="57" fill="none" stroke="#3fe43f" stroke-width="1"/>
<path d="M551 191 V249" stroke="#3fe43f" stroke-width="1"/>
<text x="512.6" y="246.2" font-size="14.2" fill="#18181a" stroke="#fff" stroke-width="1.2" stroke-opacity="0.8" paint-order="stroke">2</text>
<text x="572.2" y="246.2" font-size="14.2" fill="#18181a" stroke="#fff" stroke-width="1.2" stroke-opacity="0.8" paint-order="stroke">35</text>
</svg>

<svg style="left:309px;top:154px" width="18" height="56" viewBox="-8 154 18 56"><circle cx="-0.2" cy="160.4" r="4.3" fill="#12a048" stroke="#0a2c16" stroke-width="0.9"/><path d="M-5.2 172.4 L-2 171.6 L-0.8 172.6 L3.4 172.4 L5.4 171.6 L5.5 178 L-4.6 178.6 Z" fill="#7c7d83"/><rect x="-5.2" y="185.6" width="5" height="4.8" rx="1" fill="#6c6d75"/><path d="M-7 192.4 H1" stroke="#3c4c9c" stroke-width="0.8"/><circle cx="1.7" cy="201.9" r="2.3" fill="#7c7d83"/><path d="M3 203.4 L6.4 206.6" stroke="#7c7d83" stroke-width="1.3"/></svg>
<svg style="left:628px;top:154px" width="18" height="56" viewBox="-8 154 18 56"><circle cx="-0.2" cy="160.4" r="4.3" fill="#12a048" stroke="#0a2c16" stroke-width="0.9"/><path d="M-5.2 172.4 L-2 171.6 L-0.8 172.6 L3.4 172.4 L5.4 171.6 L5.5 178 L-4.6 178.6 Z" fill="#7c7d83"/><rect x="-5.2" y="185.6" width="5" height="4.8" rx="1" fill="#6c6d75"/><path d="M-7 192.4 H1" stroke="#3c4c9c" stroke-width="0.8"/><circle cx="1.7" cy="201.9" r="2.3" fill="#7c7d83"/><path d="M3 203.4 L6.4 206.6" stroke="#7c7d83" stroke-width="1.3"/></svg>
<div class="row" style="top:280px"><div class="tri-r" style="left:4px;top:2.2px"></div><svg style="left:14.2px;top:0.5px" width="9" height="9" viewBox="0 0 9 9"><path d="M0.6 2.2 L6.4 0.6 L8.4 2 L7.2 6.6 L1.8 8.4 L0.6 7.4 Z" fill="#fff" stroke="#26262a" stroke-width="0.8"/><path d="M1.2 2.6 L4 1.9 L4.3 4.4 L1.4 5.2 Z" fill="#18b0f0"/><path d="M4.6 1.7 L7.2 1.1 L7.8 2.6 L5 3.8 Z" fill="#e0148c"/><path d="M1.5 5.5 L4.3 4.8 L4.5 7 L1.9 7.8 Z" fill="#ffe414"/></svg><span class="t" style="left:25.5px">FB002 (1)</span></div>
<div class="row" style="top:292px"><div class="tri-r" style="left:4px;top:2.2px"></div><svg style="left:14.2px;top:0.5px" width="9" height="9" viewBox="0 0 9 9"><path d="M0.6 2.2 L6.4 0.6 L8.4 2 L7.2 6.6 L1.8 8.4 L0.6 7.4 Z" fill="#fff" stroke="#26262a" stroke-width="0.8"/><path d="M1.2 2.6 L4 1.9 L4.3 4.4 L1.4 5.2 Z" fill="#18b0f0"/><path d="M4.6 1.7 L7.2 1.1 L7.8 2.6 L5 3.8 Z" fill="#e0148c"/><path d="M1.5 5.5 L4.3 4.8 L4.5 7 L1.9 7.8 Z" fill="#ffe414"/></svg><span class="t" style="left:25.5px">FB003 (1)</span></div>
<div class="row" style="top:304px"><div class="tri-r" style="left:4px;top:2.2px"></div><svg style="left:14.2px;top:0.5px" width="9" height="9" viewBox="0 0 9 9"><path d="M0.6 2.2 L6.4 0.6 L8.4 2 L7.2 6.6 L1.8 8.4 L0.6 7.4 Z" fill="#fff" stroke="#26262a" stroke-width="0.8"/><path d="M1.2 2.6 L4 1.9 L4.3 4.4 L1.4 5.2 Z" fill="#18b0f0"/><path d="M4.6 1.7 L7.2 1.1 L7.8 2.6 L5 3.8 Z" fill="#e0148c"/><path d="M1.5 5.5 L4.3 4.8 L4.5 7 L1.9 7.8 Z" fill="#ffe414"/></svg><span class="t" style="left:25.5px">FB004 (1)</span></div>
<div class="row" style="top:316px"><div class="tri-r" style="left:4px;top:2.2px"></div><svg style="left:14.2px;top:0.5px" width="9" height="9" viewBox="0 0 9 9"><path d="M0.6 2.2 L6.4 0.6 L8.4 2 L7.2 6.6 L1.8 8.4 L0.6 7.4 Z" fill="#fff" stroke="#26262a" stroke-width="0.8"/><path d="M1.2 2.6 L4 1.9 L4.3 4.4 L1.4 5.2 Z" fill="#18b0f0"/><path d="M4.6 1.7 L7.2 1.1 L7.8 2.6 L5 3.8 Z" fill="#e0148c"/><path d="M1.5 5.5 L4.3 4.8 L4.5 7 L1.9 7.8 Z" fill="#ffe414"/></svg><span class="t" style="left:25.5px">FB005 (1)</span></div>
<div class="row" style="top:328px"><div class="tri-r" style="left:4px;top:2.2px"></div><svg style="left:14.2px;top:0.5px" width="9" height="9" viewBox="0 0 9 9"><path d="M0.6 2.2 L6.4 0.6 L8.4 2 L7.2 6.6 L1.8 8.4 L0.6 7.4 Z" fill="#fff" stroke="#26262a" stroke-width="0.8"/><path d="M1.2 2.6 L4 1.9 L4.3 4.4 L1.4 5.2 Z" fill="#18b0f0"/><path d="M4.6 1.7 L7.2 1.1 L7.8 2.6 L5 3.8 Z" fill="#e0148c"/><path d="M1.5 5.5 L4.3 4.8 L4.5 7 L1.9 7.8 Z" fill="#ffe414"/></svg><span class="t" style="left:25.5px">FB006 (1)</span></div>
<div class="row" style="top:340px"><div class="tri-r" style="left:4px;top:2.2px"></div><svg style="left:14.2px;top:0.5px" width="9" height="9" viewBox="0 0 9 9"><path d="M0.6 2.2 L6.4 0.6 L8.4 2 L7.2 6.6 L1.8 8.4 L0.6 7.4 Z" fill="#fff" stroke="#26262a" stroke-width="0.8"/><path d="M1.2 2.6 L4 1.9 L4.3 4.4 L1.4 5.2 Z" fill="#18b0f0"/><path d="M4.6 1.7 L7.2 1.1 L7.8 2.6 L5 3.8 Z" fill="#e0148c"/><path d="M1.5 5.5 L4.3 4.8 L4.5 7 L1.9 7.8 Z" fill="#ffe414"/></svg><span class="t" style="left:25.5px">FB007 (1)</span></div>
<div class="row" style="top:352px"><div class="tri-r" style="left:4px;top:2.2px"></div><svg style="left:14.2px;top:0.5px" width="9" height="9" viewBox="0 0 9 9"><path d="M0.6 2.2 L6.4 0.6 L8.4 2 L7.2 6.6 L1.8 8.4 L0.6 7.4 Z" fill="#fff" stroke="#26262a" stroke-width="0.8"/><path d="M1.2 2.6 L4 1.9 L4.3 4.4 L1.4 5.2 Z" fill="#18b0f0"/><path d="M4.6 1.7 L7.2 1.1 L7.8 2.6 L5 3.8 Z" fill="#e0148c"/><path d="M1.5 5.5 L4.3 4.8 L4.5 7 L1.9 7.8 Z" fill="#ffe414"/></svg><span class="t" style="left:25.5px">FB008 (1)</span></div>
<div class="row" style="top:364px"><div class="tri-r" style="left:4px;top:2.2px"></div><svg style="left:14.2px;top:0.5px" width="9" height="9" viewBox="0 0 9 9"><path d="M0.6 2.2 L6.4 0.6 L8.4 2 L7.2 6.6 L1.8 8.4 L0.6 7.4 Z" fill="#fff" stroke="#26262a" stroke-width="0.8"/><path d="M1.2 2.6 L4 1.9 L4.3 4.4 L1.4 5.2 Z" fill="#18b0f0"/><path d="M4.6 1.7 L7.2 1.1 L7.8 2.6 L5 3.8 Z" fill="#e0148c"/><path d="M1.5 5.5 L4.3 4.8 L4.5 7 L1.9 7.8 Z" fill="#ffe414"/></svg><span class="t" style="left:25.5px">FB009 (1)</span></div>
<div class="abs" style="left:159px;top:413.4px;width:636px;height:13.4px;background:#50515a"></div>
<div class="t" style="left:162.6px;top:414.5px;font-size:7.4px">Selection:</div><div class="t" style="left:200.2px;top:414.5px;font-size:7.3px;word-spacing:-0.8px">1 Sheet,</div><div class="t" style="left:231.4px;top:414.5px;font-size:7.4px;word-spacing:-0.4px">0 1up</div>
<div class="hl" style="left:3px;top:428px;width:794px;background:#8d8e94"></div>

<div class="abs" style="left:7px;top:433.3px;width:11.6px;height:11.4px;background:#5e5f66;border:1px solid #7d7e84"><svg style="left:0;top:0" width="10" height="10" viewBox="8 434.3 10 10">
<rect x="9.2" y="435.3" width="7.8" height="7.6" fill="#f4f4f6" stroke="#26262a" stroke-width="0.8"/>
<path d="M9.2 436.2 H17" stroke="#3c7cb0" stroke-width="1.2"/>
<path d="M9.8 438.6 H16.4 M9.8 440.8 H16.4" stroke="#5c5d64" stroke-width="0.7"/>
</svg></div>
<div class="abs" style="left:22.8px;top:433.3px;width:11.4px;height:11.4px;background:#d8d9dc;border:1px solid #f6f6f8"><svg style="left:0;top:0" width="10" height="10" viewBox="23.8 434.3 10 10">
<rect x="24.8" y="435.3" width="7.6" height="7.6" fill="#2c3036"/>
<path d="M24.8 436 H32.4" stroke="#3c7cb0" stroke-width="1"/>
<path d="M25.6 438.3 H28 M29.2 438.3 H31.6 M25.6 440.8 H28 M29.2 440.8 H31.6" stroke="#bfe6f8" stroke-width="1.3"/>
</svg></div>
<div class="btn" style="left:677px;top:433px;width:54px;height:12px"><span class="t b" style="left:0;top:0.5px;width:52px">Submit...</span></div>
<div class="btn" style="left:739px;top:433px;width:54px;height:12px"><span class="t b" style="left:0;top:0.5px;width:52px">Close Job</span></div>
<div class="abs" style="left:3px;top:449.6px;width:794.5px;height:3.8px;background:linear-gradient(#d8d8dc,#d0d1d4 25%,#b4b5b9 60%,#8a8b91)"></div>
<div class="abs" style="left:3px;top:456px;width:794px;height:13px;border-top:1px solid #5e5f66;border-bottom:1px solid #85868c;border-left:1px solid #85868c"></div>
<div class="abs" style="left:3px;top:472px;width:794px;height:2px;background:#64656c"></div>
<div class="abs" style="left:789px;top:457.5px;width:8px;height:11px;background:#5a5b62"></div>
<svg style="left:789px;top:457px" width="8" height="16" viewBox="789 457 8 16">
<path d="M790.4 466 V461.6 H795.4 V465 M792.9 461.6 V466" stroke="#f4f4f6" stroke-width="0.9" fill="none"/>
<path d="M793.6 465.6 H796.6 L795.1 467.4 Z" fill="#f4f4f6"/>
<rect x="789" y="469.6" width="8" height="2.4" fill="#85868c"/>
<path d="M791.6 470.8 H794.6" stroke="#f0f0f2" stroke-width="0.8"/>
</svg>
<svg style="left:376px;top:449px" width="50" height="5" viewBox="376 449 50 5">
<path d="M379 453 L381 450.8 L383 453 Z" fill="#55565d"/>
<path d="M418 450.2 L420 452.4 L422 450.2 Z" fill="#55565d"/>
<path d="M395 451.6 H406.5" stroke="#55565d" stroke-width="1" stroke-dasharray="1 1.4"/>
</svg>

<div class="t b" style="left:9.2px;top:458px">Elements</div>
<div class="abs" style="left:160.0px;top:456.5px;width:1px;height:12.5px;background:#9a9ba0"></div>
<div class="abs" style="left:149.2px;top:458.6px;width:0;height:0;border-bottom:3px solid #d8d8dc;border-left:3px solid transparent;border-right:3px solid transparent"></div>
<div class="abs" style="left:149.2px;top:463.5px;width:0;height:0;border-top:3px solid #d8d8dc;border-left:3px solid transparent;border-right:3px solid transparent"></div>
<div class="t b" style="left:166.5px;top:458px">Sequence</div>
<div class="abs" style="left:317.0px;top:456.5px;width:1px;height:12.5px;background:#9a9ba0"></div>
<div class="abs" style="left:306.2px;top:458.6px;width:0;height:0;border-bottom:3px solid #d8d8dc;border-left:3px solid transparent;border-right:3px solid transparent"></div>
<div class="abs" style="left:306.2px;top:463.5px;width:0;height:0;border-top:3px solid #d8d8dc;border-left:3px solid transparent;border-right:3px solid transparent"></div>
<div class="t b" style="left:323.5px;top:458px">Status</div>
<div class="abs" style="left:472.9px;top:456.5px;width:1px;height:12.5px;background:#9a9ba0"></div>
<div class="abs" style="left:462.09999999999997px;top:458.6px;width:0;height:0;border-bottom:3px solid #d8d8dc;border-left:3px solid transparent;border-right:3px solid transparent"></div>
<div class="abs" style="left:462.09999999999997px;top:463.5px;width:0;height:0;border-top:3px solid #d8d8dc;border-left:3px solid transparent;border-right:3px solid transparent"></div>
<div class="t b" style="left:479.8px;top:458px">Recent Message</div>
<div class="abs" style="left:629.9px;top:456.5px;width:1px;height:12.5px;background:#9a9ba0"></div>
<div class="abs" style="left:619.1px;top:458.6px;width:0;height:0;border-bottom:3px solid #d8d8dc;border-left:3px solid transparent;border-right:3px solid transparent"></div>
<div class="abs" style="left:619.1px;top:463.5px;width:0;height:0;border-top:3px solid #d8d8dc;border-left:3px solid transparent;border-right:3px solid transparent"></div>
<div class="t b" style="left:636.5px;top:458px">Modification Date</div>
<div class="abs" style="left:787.5px;top:456.5px;width:1px;height:12.5px;background:#9a9ba0"></div>
<div class="abs" style="left:776.7px;top:458.6px;width:0;height:0;border-bottom:3px solid #d8d8dc;border-left:3px solid transparent;border-right:3px solid transparent"></div>
<div class="abs" style="left:776.7px;top:463.5px;width:0;height:0;border-top:3px solid #d8d8dc;border-left:3px solid transparent;border-right:3px solid transparent"></div>
</body>
</html>
